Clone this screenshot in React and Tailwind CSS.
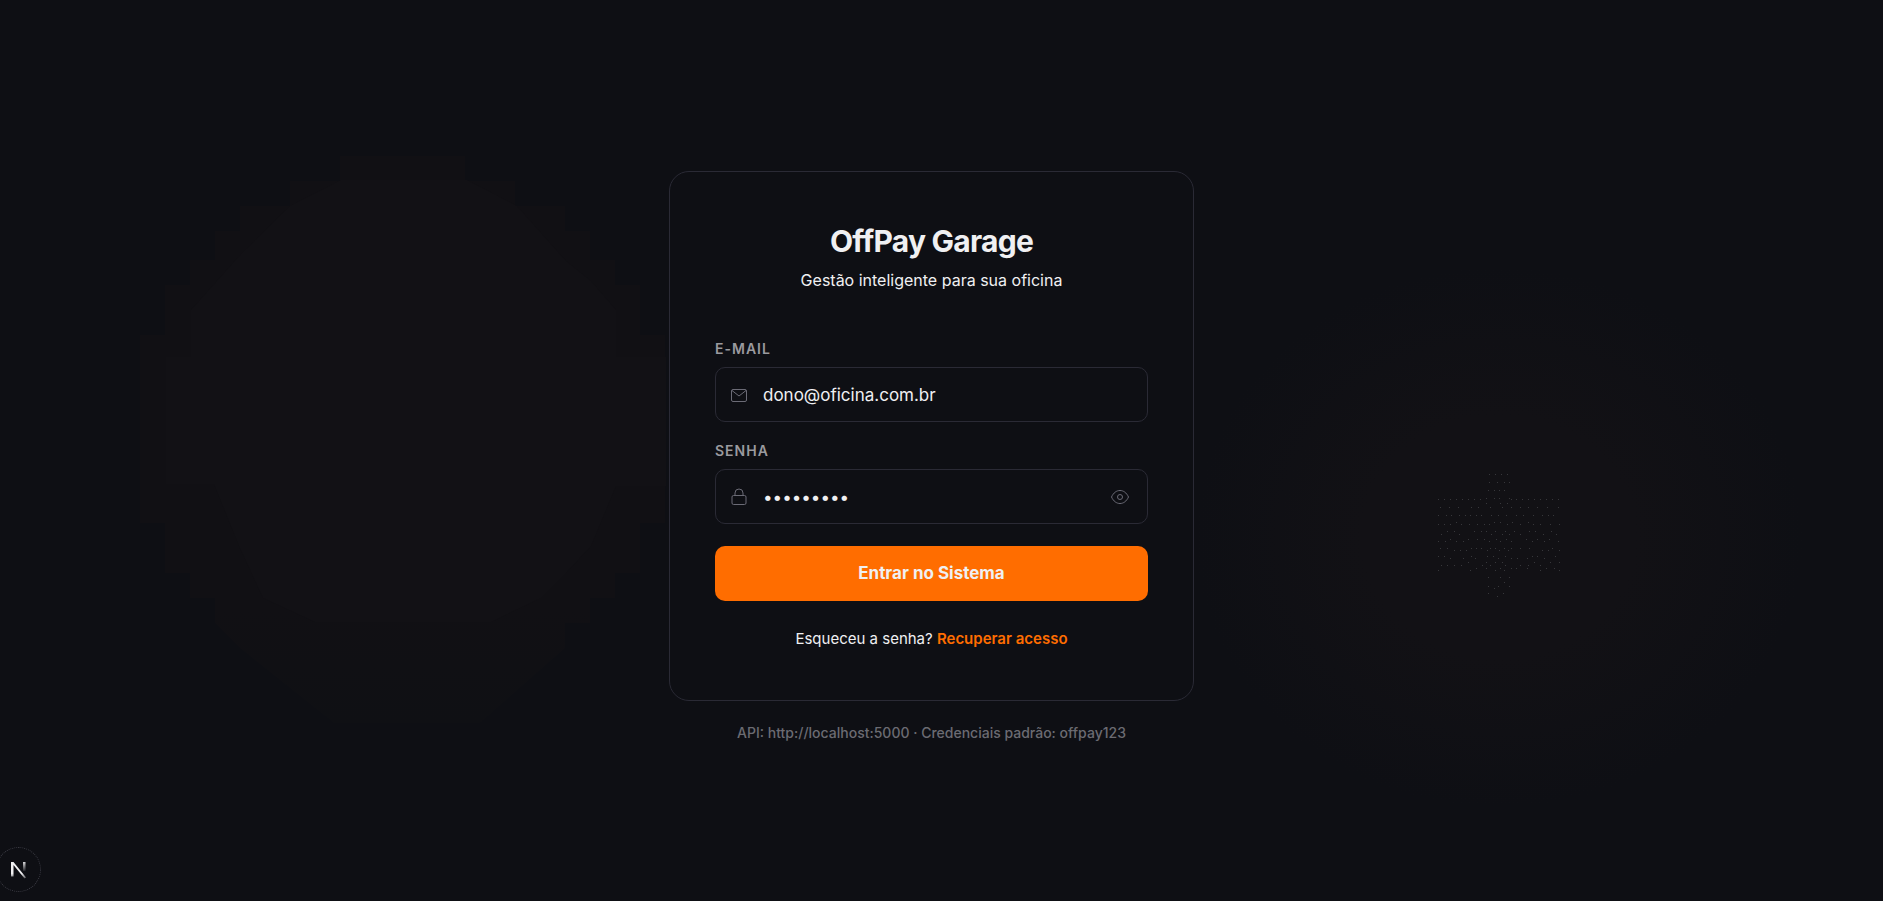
import { useState } from "react";

const LEFT_OUTER =
  "200,0 325,0 325,25 375,25 375,50 425,50 425,75 450,75 450,104 475,104 475,129 500,129 500,179 525,179 525,367 500,367 500,417 475,417 475,442 450,442 450,467 425,467 425,492 340,567 194,567 100,492 75,467 75,442 50,442 50,417 25,417 25,367 0,367 0,179 25,179 25,129 50,129 50,104 75,104 75,75 100,75 100,50 150,50 150,25 200,25";
const LEFT_INNER =
  "201,24 327,24 377,50 426,105 451,125 476,154 476,201 526,201 526,330 476,330 451,390 426,417 401,442 351,466 175,466 123,442 99,390 74,328 26,328 26,201 51,201 51,154 101,98 150,50";

const DOTS = [
  [14, [69, 75, 81, 87]],
  [22, [69, 77, 84, 89]],
  [30, [68, 74, 79, 84]],
  [38, [66, 74, 79, 89]],
  [39, [18, 24, 30, 36, 42, 48, 54, 60, 91, 96, 102, 108, 114, 120, 126, 132, 138]],
  [43, [66, 80, 87]],
  [47, [20, 29, 38, 51, 58, 70, 82, 91, 100, 108, 117, 127, 138]],
  [55, [18, 26, 31, 39, 45, 50, 56, 61, 71, 78, 86, 96, 103, 113, 122, 128, 133]],
  [62, [36, 74, 80, 92, 108]],
  [64, [18, 24, 30, 41, 49, 57, 64, 69, 87, 100, 113, 120, 130, 139]],
  [71, [27, 34, 54, 61, 66, 75, 85, 94, 109, 115, 131]],
  [74, [21, 39, 71, 82, 89, 100, 123, 136]],
  [79, [30, 48, 57, 64, 76, 86, 106, 117, 129]],
  [81, [18, 25, 36, 43, 69, 80, 91, 112, 124, 138]],
  [88, [20, 27, 51, 56, 61, 70, 75, 84, 91, 100, 109, 132]],
  [90, [34, 40, 46, 67, 79, 88, 122, 128, 139]],
  [96, [18, 24, 51, 67, 73, 85, 112, 117, 135]],
  [98, [30, 43, 55, 78, 91, 97, 107, 124]],
  [102, [48, 66, 75, 82, 114, 130, 139]],
  [105, [21, 27, 34, 41, 62, 70, 85, 100, 108, 120]],
  [108, [56, 66, 80, 91, 96, 107, 126, 134]],
  [110, [18, 50, 75, 84, 120, 139]],
  [117, [68, 80, 89]],
  [122, [84]],
  [126, [68, 78, 89]],
  [128, [74]],
  [133, [68, 83]],
  [136, [77]],
];

function Glows() {
  return (
    <div aria-hidden="true" className="pointer-events-none absolute inset-0 overflow-hidden">
      <svg width="527" height="567" className="absolute left-[140px] top-[156px]">
        <defs>
          <linearGradient id="glowFade" x1="0" y1="0" x2="0" y2="1">
            <stop offset="0.8" stopColor="#111014" />
            <stop offset="1" stopColor="#0f1014" />
          </linearGradient>
        </defs>
        <polygon points={LEFT_OUTER} fill="url(#glowFade)" />
        <polygon points={LEFT_INNER} fill="#121115" />
      </svg>
      <svg width="608" height="540" className="absolute left-[1195px] top-[267px]">
        <defs>
          <radialGradient id="glow">
            <stop offset="0.45" stopColor="#121115" />
            <stop offset="1" stopColor="#0e0f14" />
          </radialGradient>
        </defs>
        <ellipse cx="304" cy="270" rx="304" ry="270" fill="url(#glow)" />
        <g transform="translate(225 193)" fill="#37373b">
          {DOTS.map(([y, xs]) =>
            xs.map((x) => <rect key={`${x}-${y}`} x={x} y={y} width="1" height="1" />)
          )}
        </g>
      </svg>
    </div>
  );
}

function MailIcon() {
  return (
    <svg width="20" height="20" viewBox="0 0 20 20" fill="none" stroke="currentColor" aria-hidden="true">
      <rect x="2.5" y="4.5" width="15" height="12" rx="1.5" />
      <path d="M3 5.5l7 5.5 7-5.5" />
    </svg>
  );
}

function LockIcon() {
  return (
    <svg width="20" height="20" viewBox="0 0 20 20" fill="none" stroke="currentColor" aria-hidden="true">
      <rect x="3" y="8.5" width="14" height="9" rx="1.5" />
      <path d="M6 8.5V6a4 4 0 0 1 8 0v2.5" />
    </svg>
  );
}

function EyeIcon() {
  return (
    <svg width="20" height="20" viewBox="0 0 20 20" fill="none" stroke="currentColor" aria-hidden="true">
      <path d="M1.500 10c2-4.300 5-6.500 8.500-6.500s6.500 2.200 8.500 6.500c-2 4.300-5 6.500-8.500 6.500S3.500 14.300 1.500 10z" />
      <circle cx="10" cy="10" r="2.500" />
    </svg>
  );
}

const label = "text-sm leading-5 font-semibold tracking-[1px] text-[#9a9a9f]";
const field =
  "mt-2 flex h-[55px] items-center rounded-[10px] border border-[#2a2a35] pl-[13px] pr-[17px] text-[#6b6b76]";
const input = "ml-[14px] min-w-0 flex-1 bg-transparent text-[17px] leading-6 text-[#f0f0f2] outline-none";

export default function App() {
  const [visible, setVisible] = useState(false);
  return (
    <div className="relative flex min-h-screen flex-col items-center bg-[#0e0f14] pr-5 pt-[171px] font-['Inter',sans-serif]">
      <Glows />
      <main className="relative w-full max-w-[525px]">
        <div className="rounded-[20px] border border-[#2a2a35] bg-[#0e0f14] px-[45px] pb-[50px] pt-[49px]">
          <header className="text-center">
            <h1 className="text-3xl leading-10 font-bold tracking-tight text-[#f0f0f2]">OffPay Garage</h1>
            <p className="mt-[7px] text-base leading-6 text-[#f0f0f2]">Gestão inteligente para sua oficina</p>
          </header>
          <form className="mt-[47px] flex flex-col" onSubmit={(e) => e.preventDefault()}>
            <label htmlFor="email" className={label}>E-MAIL</label>
            <div className={field}>
              <MailIcon />
              <input id="email" type="email" defaultValue="dono@oficina.com.br" className={input} />
            </div>
            <label htmlFor="senha" className={`${label} mt-[19px]`}>SENHA</label>
            <div className={field}>
              <LockIcon />
              <input id="senha" type={visible ? "text" : "password"} defaultValue="offpay123" className={input} />
              <button type="button" aria-label="Mostrar senha" onClick={() => setVisible(!visible)}>
                <EyeIcon />
              </button>
            </div>
            <button type="submit" className="mt-[22px] h-[55px] rounded-[10px] bg-[#ff6d00] text-[17px] font-bold text-[#f0f0f2]">
              Entrar no Sistema
            </button>
          </form>
          <p className="mt-[27px] text-center text-[15px] leading-[22px] text-[#f0f0f2]">
            Esqueceu a senha? <a href="#recuperar" className="font-semibold text-[#ff6d00]">Recuperar acesso</a>
          </p>
        </div>
        <p className="mt-5 text-center text-sm leading-6 font-medium text-[#6b6b72]">
          API: http://localhost:5000 · Credenciais padrão: offpay123
        </p>
      </main>
      <button type="button" aria-label="Next.js" className="absolute bottom-[9px] -left-1 flex size-[45px] items-center justify-center rounded-full border border-dotted border-[#3d3d46] bg-[#0e0f14] pr-px">
        <svg width="16" height="18" viewBox="0 0 16 18" fill="none" aria-hidden="true">
          <defs>
            <linearGradient id="fade" x1="0" y1="0" x2="0" y2="1">
              <stop offset="0" stopColor="#d8d8da" />
              <stop offset="1" stopColor="#d8d8da" stopOpacity="0.1" />
            </linearGradient>
            <linearGradient id="tail" x1="0" y1="0" x2="0" y2="1">
              <stop offset="0.7" stopColor="#f0f0f2" />
              <stop offset="1" stopColor="#f0f0f2" stopOpacity="0.3" />
            </linearGradient>
          </defs>
          <path d="M1 1h2.500L16 16.500l-1.500 1L3.500 4v11.500H1z" fill="url(#tail)" />
          <rect x="13" y="1" width="2.500" height="9" fill="url(#fade)" />
        </svg>
      </button>
    </div>
  );
}
